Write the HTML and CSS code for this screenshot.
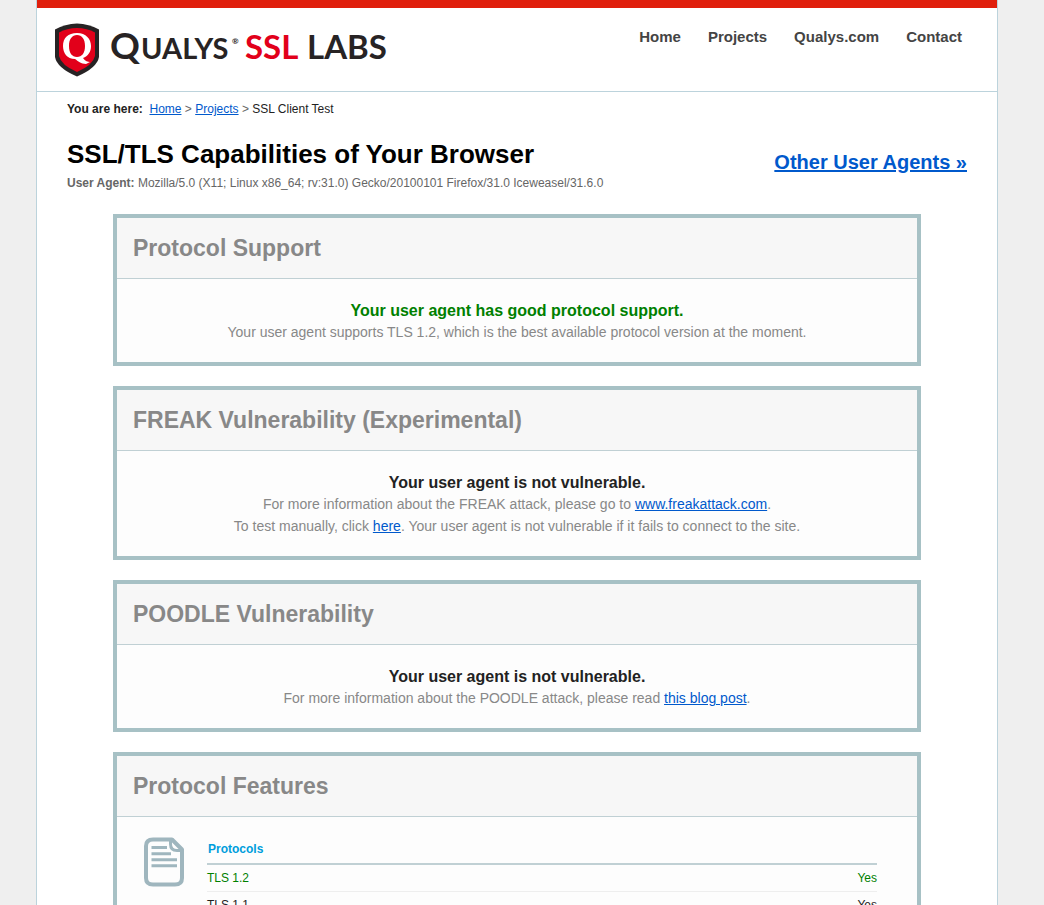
FILE: index.html
```html
<!DOCTYPE html>
<html lang="en">
<head>
<meta charset="utf-8">
<title>SSL/TLS Capabilities of Your Browser</title>
<link rel="stylesheet" href="styles.css">
</head>
<body>
<div class="page">
  <header class="header">
    <a class="logo" href="#" aria-label="Qualys SSL Labs">
      <svg width="336" height="56" viewBox="0 0 336 56">
        <path d="M23 0.500Q35 1 45 6.500V34Q43 45 23 53.500Q3 45 1 34V6.500Q11 1 23 0.500Z" fill="#272324"/>
        <path d="M23 5Q33 5 41 9.500V33Q39 42 23 49Q7 42 5 33V9.500Q13 5 23 5Z" fill="#e2001a"/>
        <path fill-rule="evenodd" fill="#fff" d="M23 10C32 10 37 16 37 23C37 29 34 33 29 35C31 38 34 39 36 39L32 41C27 41 24 38 21 36C13 36 9 30 9 23C9 15 14 10 23 10ZM23 12C18 12 15 16 15 23C15 30 18 34 23 34C28 34 31 30 31 23C31 16 28 12 23 12Z"/>
        <g class="wordmark">
          <text x="56" y="36" class="cap-large">Q</text>
          <text x="87" y="36" class="cap-small">UALYS</text>
          <text x="178" y="21" class="mark">®</text>
          <text x="191" y="36" class="cap-mid red">SSL</text>
          <text x="253" y="36" class="cap-mid">LABS</text>
        </g>
      </svg>
    </a>
    <nav class="nav">
      <a href="#">Home</a>
      <a href="#">Projects</a>
      <a href="#">Qualys.com</a>
      <a href="#">Contact</a>
    </nav>
  </header>

  <main class="main">
    <div class="crumbs"><b>You are here:</b>&nbsp; <a href="#">Home</a> <span class="sep">&gt;</span> <a href="#">Projects</a> <span class="sep">&gt;</span> SSL Client Test</div>

    <div class="title-row">
      <div>
        <h1>SSL/TLS Capabilities of Your Browser</h1>
        <div class="agent"><b>User Agent:</b> Mozilla/5.0 (X11; Linux x86_64; rv:31.0) Gecko/20100101 Firefox/31.0 Iceweasel/31.6.0</div>
      </div>
      <a class="other" href="#">Other User Agents »</a>
    </div>

    <div class="reports">
      <section class="report">
        <h2>Protocol Support</h2>
        <div class="verdict">
          <strong class="good">Your user agent has good protocol support.</strong>
          <p>Your user agent supports TLS 1.2, which is the best available protocol version at the moment.</p>
        </div>
      </section>
      <section class="report">
        <h2>FREAK Vulnerability (Experimental)</h2>
        <div class="verdict">
          <strong>Your user agent is not vulnerable.</strong>
          <p>For more information about the FREAK attack, please go to <a href="#">www.freakattack.com</a>.</p>
          <p>To test manually, click <a href="#">here</a>. Your user agent is not vulnerable if it fails to connect to the site.</p>
        </div>
      </section>
      <section class="report">
        <h2>POODLE Vulnerability</h2>
        <div class="verdict">
          <strong>Your user agent is not vulnerable.</strong>
          <p>For more information about the POODLE attack, please read <a href="#">this blog post</a>.</p>
        </div>
      </section>
      <section class="report">
        <h2>Protocol Features</h2>
        <div class="features">
          <svg class="doc" width="40" height="50" viewBox="0 0 40 50" fill="none" stroke="#9fb6be">
            <path stroke-width="4" stroke-linejoin="round" d="M9 2.500H28L38 12.500V41Q38 47.500 31 47.500H9Q2 47.500 2 41V9Q2 2.500 9 2.500Z"/>
            <path stroke-width="3" d="M26.500 3V7Q26.500 13.500 33 13.500H38"/>
            <path stroke-width="3" d="M7.500 10.500H23M7.500 16.700H27M7.500 22.700H33M7.500 28.700H33"/>
          </svg>
          <table>
            <thead><tr><th colspan="2">Protocols</th></tr></thead>
            <tbody>
              <tr class="good"><td>TLS 1.2</td><td>Yes</td></tr>
              <tr><td>TLS 1.1</td><td>Yes</td></tr>
            </tbody>
          </table>
        </div>
      </section>
    </div>
  </main>
</div>
</body>
</html>
```
FILE: styles.css
```css
* { box-sizing: border-box; }
html { background: #efefef; height: 100%; overflow: hidden; }
body {
  margin: 0;
  padding-right: 10px;
  height: 100%;
  overflow: hidden;
  color: #222;
  font-family: "Liberation Sans", Arial, sans-serif;
  font-size: 12px;
}
a { color: #0059cc; }
.page {
  max-width: 962px;
  min-height: 100%;
  margin: 0 auto;
  background: #fff;
  border: solid #bcd3dc;
  border-width: 0 1px;
}
.header {
  display: flex;
  justify-content: space-between;
  align-items: flex-start;
  height: 92px;
  padding: 15px 35px 0 17px;
  border-top: 8px solid #e01f0c;
  border-bottom: 1px solid #bcd3dc;
}
.logo { display: block; }
.logo svg { display: block; }
.wordmark { font-family: Lato, sans-serif; font-weight: 700; fill: #272324; }
.cap-large { font-size: 37px; }
.cap-small { font-size: 29px; }
.cap-mid { font-size: 33px; }
.mark { font-size: 8px; }
.red { fill: #e2001a; }
.nav { display: flex; gap: 27px; padding-top: 5px; }
.nav a {
  color: #444;
  font-size: 15px;
  font-weight: bold;
  line-height: 18px;
  text-decoration: none;
}
.main { padding: 8px 30px 0; }
.crumbs { line-height: 18px; }
.sep { color: #666; }
.title-row {
  display: flex;
  justify-content: space-between;
  align-items: center;
  padding-top: 20px;
}
h1 {
  margin: 0;
  color: #000;
  font-size: 26px;
  line-height: 32px;
}
.agent { color: #666; line-height: 26px; }
.other { font-size: 20px; font-weight: bold; line-height: 24px; padding-bottom: 10px; }
.reports {
  max-width: 808px;
  margin: 18px auto 0;
  display: grid;
  gap: 20px;
}
.report { border: 4px solid #a7c1c5; background: #fdfdfd; }
h2 {
  margin: 0;
  padding: 15px 16px;
  background: #f7f7f7;
  border-bottom: 1px solid #c0d0d4;
  color: #888;
  font-size: 23px;
  line-height: 30px;
}
.verdict {
  padding: 21px 16px 19px;
  color: #888;
  font-size: 14px;
  line-height: 22px;
  text-align: center;
}
.verdict strong { display: block; color: #222; font-size: 16px; line-height: 21px; }
.verdict p { margin: 0; }
.verdict .good, tr.good { color: #008000; }
.features { display: flex; align-items: flex-start; gap: 23px; padding: 20px 40px 20px 27px; }
.doc { flex: none; }
table { flex: 1; border-collapse: collapse; }
th {
  padding: 1px 1px 3px;
  border-bottom: 2px solid #c0d0d4;
  color: #009ddc;
  line-height: 22px;
  text-align: left;
}
td {
  padding: 0;
  border-bottom: 1px solid #eee;
  line-height: 26px;
}
td:last-child { text-align: right; }
```
